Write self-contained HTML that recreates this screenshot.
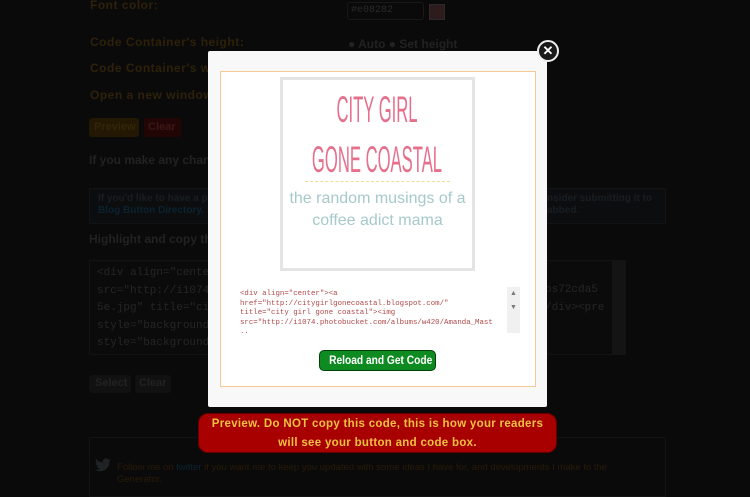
<!DOCTYPE html>
<html><head><style>
*{margin:0;padding:0;box-sizing:border-box}
body{width:750px;height:488px;background:#0a0a0a;position:relative;overflow:hidden;font-family:"Liberation Sans",sans-serif}
.a{position:absolute;white-space:nowrap}
.lbl{color:#2e210a;font-size:12px;font-weight:bold;letter-spacing:.5px}
.gr{color:#222;font-size:12px;font-weight:bold}
.mono{font-family:"Liberation Mono",monospace;font-size:11px;color:#262626;line-height:17.5px}
.t{display:block;transform:scaleX(.45);transform-origin:center}
</style></head><body>
<div class="a lbl" style="left:90px;top:-2px">Font color:</div>
<div class="a" style="left:347px;top:2px;width:77px;height:18px;border:1px solid #181818;border-radius:3px;font-size:10px;color:#2a2a2a;padding:2px 3px;font-family:'Liberation Mono',monospace">#e08282</div>
<div class="a" style="left:429px;top:4px;width:16px;height:16px;background:#2e1c1c;border:1px solid #2a2a2a"></div>
<div class="a lbl" style="left:90px;top:35px">Code Container's height:</div>
<div class="a gr" style="left:348px;top:37px">● Auto ● Set height</div>
<div class="a lbl" style="left:90px;top:61px">Code Container's width:</div>
<div class="a lbl" style="left:90px;top:88px">Open a new window?</div>
<div class="a" style="left:89px;top:118px;width:50px;height:19px;background:#221803;border-radius:3px;color:#33260a;font-size:11px;font-weight:bold;padding:3px 5px">Preview</div>
<div class="a" style="left:144px;top:118px;width:37px;height:19px;background:#220505;border-radius:3px;color:#3e1616;font-size:11px;font-weight:bold;padding:3px 4px">Clear</div>
<div class="a gr" style="left:89px;top:153px">If you make any changes</div>
<div class="a" style="left:89px;top:188px;width:577px;height:36px;background:#0c0d0e;border:1px solid #111314"></div>
<div class="a" style="left:98px;top:193px;font-size:10px;font-weight:bold;color:#181e22">If you'd like to have a p</div>
<div class="a" style="left:98px;top:205px;font-size:10px;font-weight:bold;color:#0b2230">Blog Button Directory.</div>
<div class="a" style="left:547px;top:193px;font-size:10px;font-weight:bold;color:#181e22">nsider submitting it to</div>
<div class="a" style="left:547px;top:205px;font-size:10px;font-weight:bold;color:#181e22">abbed.</div>
<div class="a gr" style="left:89px;top:232px">Highlight and copy the</div>
<div class="a" style="left:89px;top:260px;width:537px;height:95px;background:#0b0b0b;border:1px solid #131313;overflow:hidden">
<div class="a mono" style="left:7px;top:4px">&lt;div align="center<br>src="http://i1074.<br>5e.jpg"  title="ci<br>style="background:<br>style="background:<br>size:100%; height:<br>display: block;  w</div>
<div class="a mono" style="left:455px;top:21px">ps72cda5<br>/div>&lt;pre<br><br><br>px 5px;</div>
<div class="a" style="left:522px;top:0;width:14px;height:95px;background:#141414"></div>
</div>
<div class="a" style="left:89px;top:375px;width:42px;height:18px;background:#111;border-radius:3px;color:#222;font-size:11px;font-weight:bold;padding:2px 6px">Select</div>
<div class="a" style="left:135px;top:375px;width:36px;height:18px;background:#111;border-radius:3px;color:#222;font-size:11px;font-weight:bold;padding:2px 4px">Clear</div>
<div class="a" style="left:89px;top:437px;width:577px;height:60px;background:#0a0a0a;border:1px solid #131313"></div>
<svg class="a" style="left:95px;top:458px" width="16" height="14" viewBox="0 0 16 14"><path d="M16 2c-.6.3-1.2.4-1.9.5.7-.4 1.2-1 1.4-1.8-.6.4-1.3.6-2.1.8C12.8.8 12 .4 11 .4 9.2.4 7.7 1.9 7.7 3.7c0 .3 0 .5.1.7C5.1 4.3 2.6 3 1.1 1 .8 1.5.7 2 .7 2.6c0 1.1.6 2.1 1.500 2.7-.5 0-1-.2-1.5-.4 0 1.6 1.1 2.9 2.6 3.2-.5.1-1 .2-1.5.1.4 1.3 1.6 2.3 3.1 2.3C3.8 11.4 2 12 .1 11.8 1.5 12.7 3.2 13.3 5 13.3c6 0 9.3-5 9.3-9.3V3.6C15 3.1 15.5 2.6 16 2z" fill="#1f2326"/></svg>
<div class="a" style="left:117px;top:462px;font-size:9.5px;color:#281b08">Follow me on <span style="color:#0c2432">twitter</span> if you want me to keep you updated with some ideas I have for, and developments I make to the</div>
<div class="a" style="left:117px;top:474px;font-size:9.5px;color:#281b08">Generator.</div>

<div class="a" style="left:208px;top:51px;width:339px;height:356px;background:#f8f8f8;border-radius:2px"></div>
<div class="a" style="left:220px;top:71px;width:316px;height:316px;background:#fff;border:1.5px solid #f5c896"></div>
<div class="a" style="left:280px;top:77px;width:195px;height:194px;background:#fff;border:3px solid #e4e4e4"></div>
<div class="a" style="left:177px;top:85px;width:400px;text-align:center;color:#e5708c;font-family:'Liberation Sans',sans-serif;font-size:37px;line-height:50px"><span class="t">CITY GIRL</span><span class="t">GONE COASTAL</span></div>
<div class="a" style="left:305px;top:181px;width:145px;border-top:1px dashed #ebe09a"></div>
<div class="a" style="left:283px;top:188px;width:189px;text-align:center;color:#a6c9cc;font-size:16px;line-height:22px">the random musings of a<br>coffee adict mama</div>
<div class="a" style="left:235px;top:286px;width:286px;height:47px;background:#fff;overflow:hidden">
<div class="a" style="left:5px;top:4px;font-family:'Liberation Mono',monospace;font-size:7.4px;color:#b04848;line-height:9.5px">&lt;div align="center">&lt;a<br>href="http://citygirlgonecoastal.blogspot.com/"<br>title="city girl gone coastal">&lt;img<br>src="http://i1074.photobucket.com/albums/w420/Amanda_Mast<br>..</div>
<div class="a" style="left:272px;top:1px;width:13px;height:46px;background:#f0f0f0;color:#777;font-size:7px;text-align:center;line-height:14px">▲<br>▼</div>
</div>
<div class="a" style="left:319px;top:350px;width:117px;height:21px;background:#0d8a20;border:1px solid #05400c;border-radius:5px;color:#fff;font-size:12px;font-weight:bold;text-align:center;line-height:19px"><span style="display:inline-block;transform:scaleX(.85)">Reload and Get Code</span></div>
<div class="a" style="left:537px;top:40px;width:22px;height:22px;border-radius:50%;background:#1a1a1a;border:2px solid #eee;color:#fff;font-size:13px;font-weight:bold;text-align:center;line-height:18px">✕</div>
<div class="a" style="left:198px;top:413px;width:359px;height:40px;background:#a80000;border:1px solid #600;border-radius:10px;color:#f0c040;font-size:11.5px;font-weight:bold;text-align:center;line-height:19px;padding-top:1px;letter-spacing:.3px">Preview. Do NOT copy this code, this is how your readers<br>will see your button and code box.</div>
</body></html>
